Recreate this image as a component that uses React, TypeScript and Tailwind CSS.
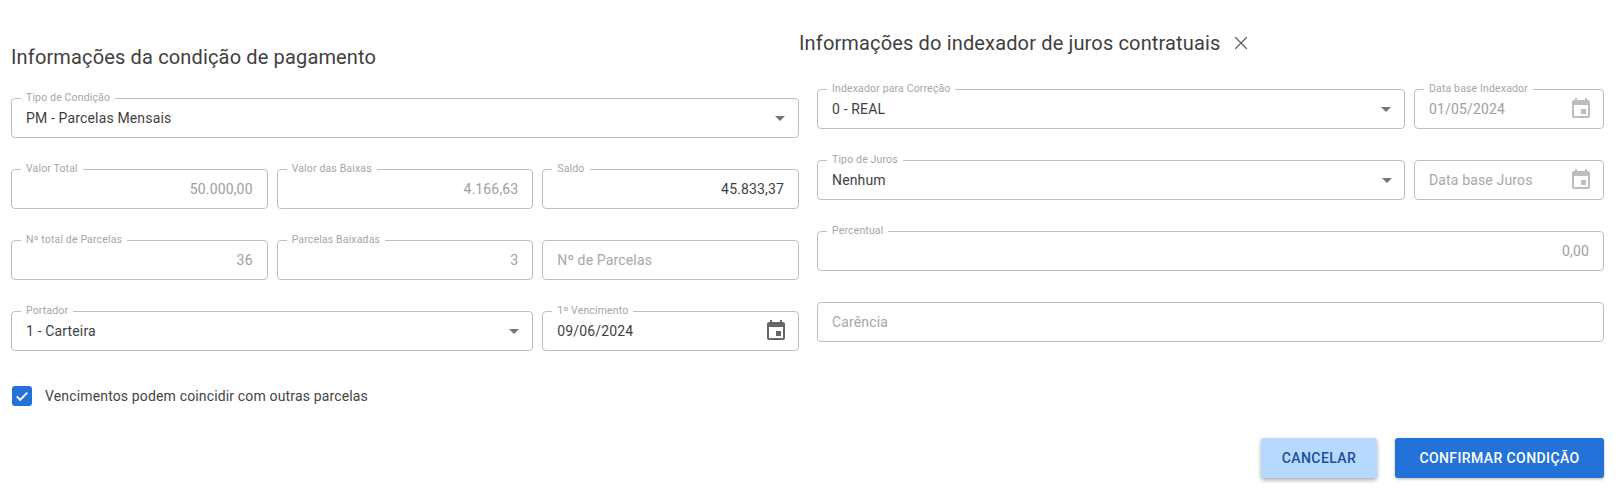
import React from "react";
import { X } from "lucide-react";

const Arrow = ({ className = "" }: { className?: string }) => (
  <svg viewBox="0 0 24 24" className={`w-6 h-6 fill-[#757575] shrink-0 ${className}`}>
    <path d="M7 10l5 5 5-5z" />
  </svg>
);

const CalendarIcon = ({ disabled }: { disabled?: boolean }) => (
  <svg viewBox="0 0 24 24" className={`w-6 h-6 shrink-0 ${disabled ? "fill-[#bdbdbd]" : "fill-[#666666]"}`}>
    <path d="M17 12h-5v5h5v-5zM16 1v2H8V1H6v2H5c-1.11 0-1.99.9-1.99 2L3 19c0 1.1.89 2 2 2h14c1.1 0 2-.9 2-2V5c0-1.1-.9-2-2-2h-1V1h-2zm3 18H5V8h14v11z" />
  </svg>
);

type FieldProps = {
  label?: string;
  value?: string;
  placeholder?: string;
  disabled?: boolean;
  right?: boolean;
  select?: boolean;
  date?: boolean;
  className?: string;
  arrowClass?: string;
};

const Field = ({ label, value, placeholder, disabled, right, select, date, className = "", arrowClass = "" }: FieldProps) => (
  <div className={`relative h-10 border border-[#bfbfbf] rounded flex items-center pl-[14px] ${className}`}>
    {label && (
      <span className="absolute -top-[8px] left-[9px] bg-white px-[5px] text-[10.5px] leading-[14px] tracking-[0.15px] text-[#a6a6a6] whitespace-nowrap">
        {label}
      </span>
    )}
    <span
      className={`flex-1 text-sm tracking-[0.15px] whitespace-nowrap ${right ? "text-right pr-[14px]" : ""} ${
        placeholder ? "text-[#a8a8a8]" : disabled ? "text-[#a0a0a0]" : "text-[#3f3f3f]"
      }`}
    >
      {value ?? placeholder}
    </span>
    {select && <Arrow className={`mr-[6px] ${arrowClass}`} />}
    {date && (
      <span className="mr-[10px]">
        <CalendarIcon disabled={disabled} />
      </span>
    )}
  </div>
);

export default function App() {
  return (
    <div className="relative w-[1621px] h-[492px] bg-white overflow-hidden font-['Roboto',sans-serif] flex">
      <div className="w-[788px] ml-[11px] shrink-0 pt-[43px]">
        <h2 className="text-[20px] leading-[28px] tracking-[0.15px] text-[#3f3f3f] font-normal">
          Informações da condição de pagamento
        </h2>
        <div className="mt-[27px] flex flex-col gap-[31px]">
          <Field label="Tipo de Condição" value="PM - Parcelas Mensais" select />
          <div className="grid grid-cols-3 gap-[9px]">
            <Field label="Valor Total" value="50.000,00" disabled right />
            <Field label="Valor das Baixas" value="4.166,63" disabled right />
            <Field label="Saldo" value="45.833,37" right />
          </div>
          <div className="grid grid-cols-3 gap-[9px]">
            <Field label="Nº total de Parcelas" value="36" disabled right />
            <Field label="Parcelas Baixadas" value="3" disabled right />
            <Field placeholder="Nº de Parcelas" />
          </div>
          <div className="grid grid-cols-3 gap-[9px]">
            <Field label="Portador" value="1 - Carteira" select className="col-span-2" />
            <Field label="1º Vencimento" value="09/06/2024" date />
          </div>
        </div>
        <label className="mt-[35px] ml-px flex items-center gap-[13px]">
          <span className="w-5 h-5 rounded-[3px] bg-[#2272d9] flex items-center justify-center">
            <svg viewBox="0 0 24 24" className="w-[18px] h-[18px] fill-none stroke-white stroke-[2.6]">
              <path d="M5 12.5l4.6 4.6L19 7.5" />
            </svg>
          </span>
          <span className="text-sm tracking-[0.15px] text-[#444444]">Vencimentos podem coincidir com outras parcelas</span>
        </label>
      </div>

      <div className="flex-1 pt-[29px] pr-[17px]">
        <div className="flex items-center">
          <h2 className="text-[20px] leading-[28px] tracking-[0.15px] text-[#3f3f3f] font-normal">
            Informações do indexador de juros contratuais
          </h2>
          <X className="ml-[9px] w-[22px] h-[22px] text-[#5f5f5f]" strokeWidth={1.3} />
        </div>
        <div className="ml-[18px] mt-[32px] flex flex-col gap-[31px]">
          <div className="flex gap-[9px]">
            <Field label="Indexador para Correção" value="0 - REAL" select className="flex-1" />
            <Field label="Data base Indexador" value="01/05/2024" disabled date className="w-[190px]" />
          </div>
          <div className="flex gap-[9px]">
            <Field label="Tipo de Juros" value="Nenhum" select className="flex-1" arrowClass="translate-x-px" />
            <Field placeholder="Data base Juros" disabled date className="w-[190px]" />
          </div>
          <Field label="Percentual" value="0,00" disabled right />
          <Field placeholder="Carência" />
        </div>
        <div className="mt-[96px] flex justify-end gap-[18px]">
          <button className="h-10 w-[116px] rounded-[3px] bg-[#b8d9ff] text-[#184f99] text-sm font-medium tracking-[0.4px] shadow-[0_2px_4px_rgba(0,0,0,0.35)]">
            CANCELAR
          </button>
          <button className="h-10 w-[209px] rounded-[3px] bg-[#2272d9] text-white text-sm font-medium tracking-[0.4px] shadow-[0_1px_3px_rgba(0,0,0,0.3)]">
            CONFIRMAR CONDIÇÃO
          </button>
        </div>
      </div>
    </div>
  );
}
